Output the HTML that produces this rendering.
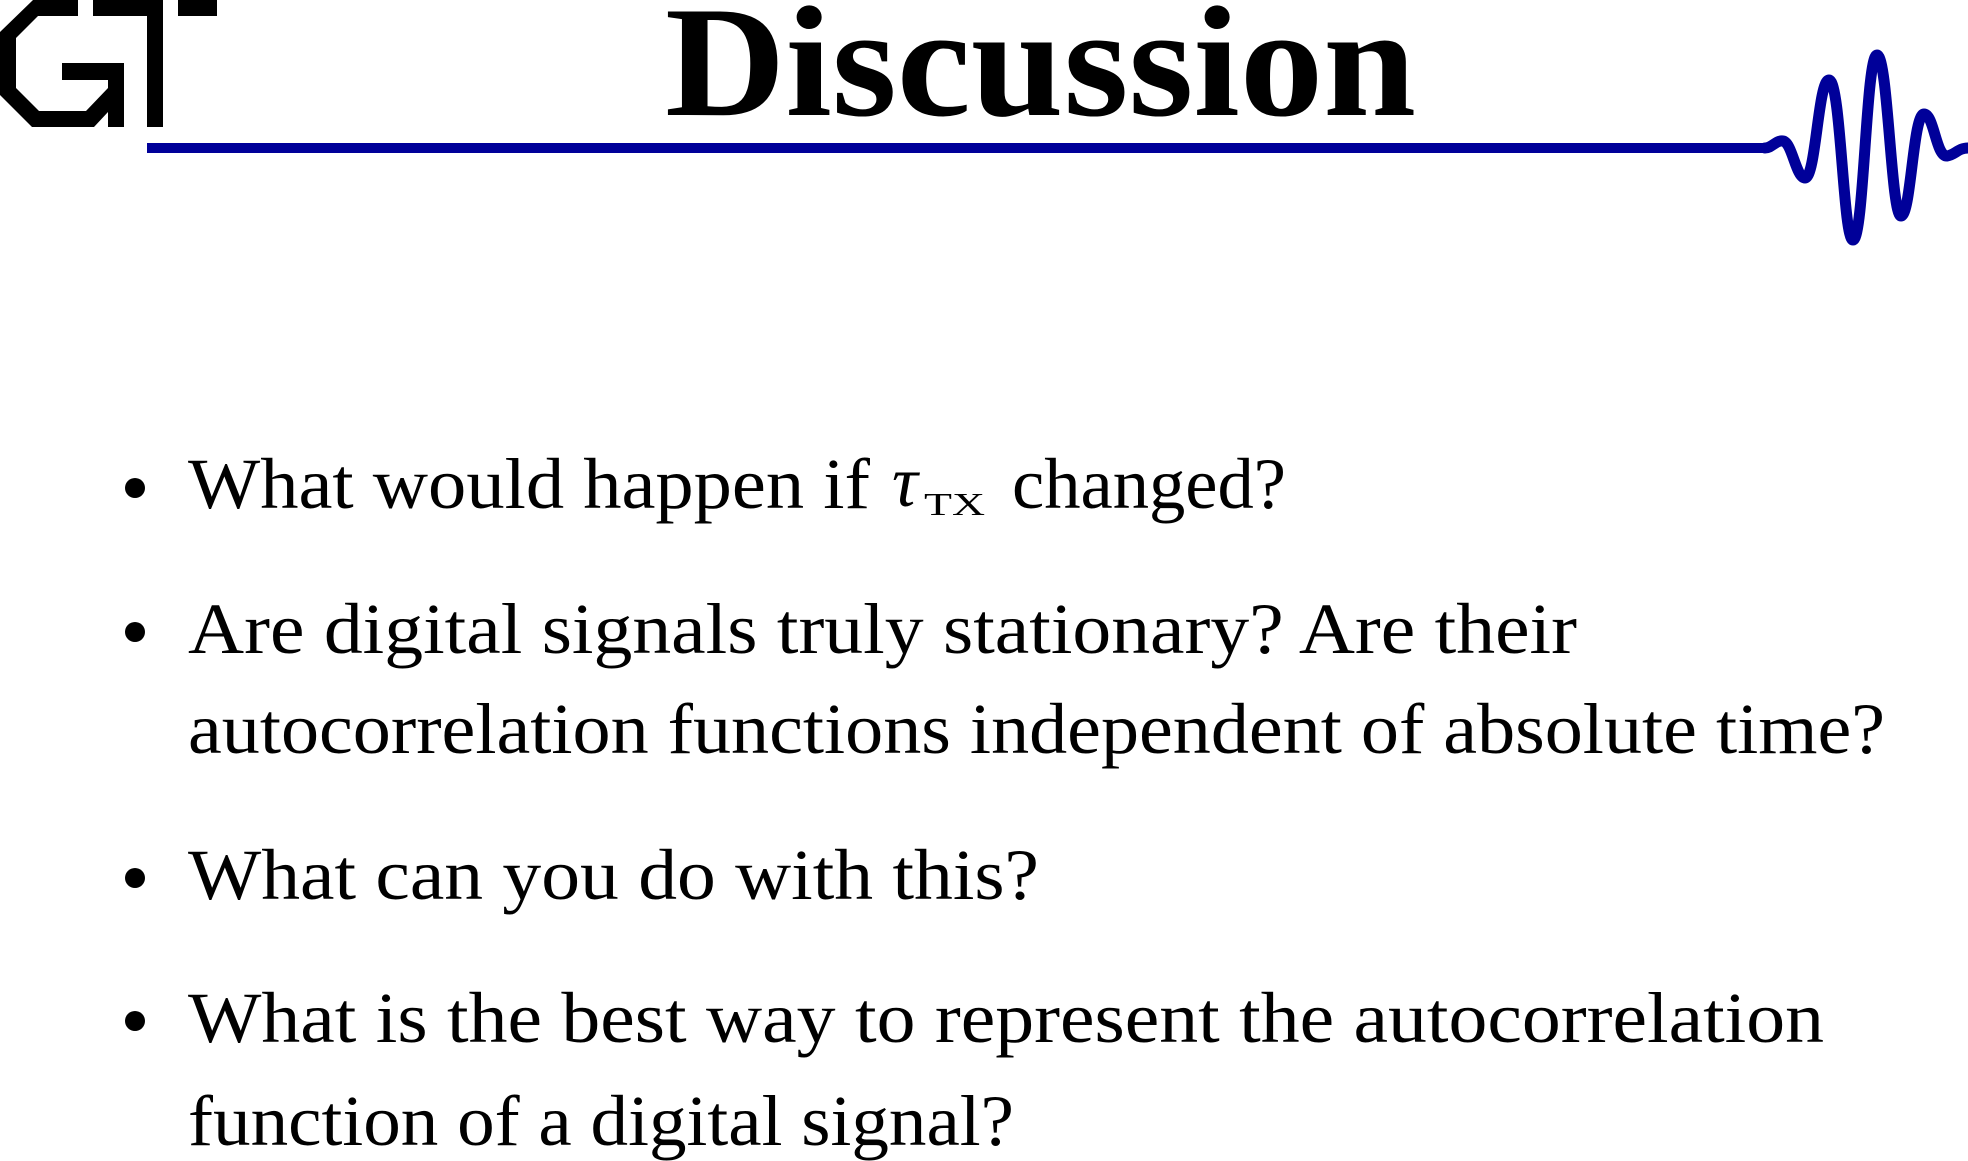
<!DOCTYPE html>
<html><head><meta charset="utf-8"><style>
html,body{margin:0;padding:0;background:#fff;width:1968px;height:1161px;overflow:hidden}
svg{display:block}
text{font-family:"Liberation Serif","DejaVu Serif",serif;fill:#000}
</style></head><body>
<svg width="1968" height="1161" viewBox="0 0 1968 1161" xmlns="http://www.w3.org/2000/svg">
<polygon points="78,0 33,0 0,32 0,95 32,127 94,127 108,112 108,127 124,127 124,63 62,63 62,80 108,80 108,88 86,111 39,111 16,88 16,38 38,16 78,16" fill="#000"/>
<polygon points="93,0 163,0 163,127 147,127 147,16 93,16" fill="#000"/>
<rect x="178" y="0" width="39" height="16" fill="#000"/>
<rect x="147" y="143" width="1622" height="10" fill="#000099"/>
<path d="M1765,148 C1772,148 1776,140 1783,141 C1792,142 1796,178 1805,178 C1816,178 1818,80 1829,80 C1841,80 1843,240 1853,240 C1864,240 1866,55 1877,55 C1888,55 1891,216 1901,216 C1911,216 1913,114 1924,114 C1934,114 1936,157 1947,156 C1955,155 1958,148 1968,148" fill="none" stroke="#000099" stroke-width="11" stroke-linecap="round"/>
<text x="665" y="115" font-size="158" font-weight="bold" textLength="751" lengthAdjust="spacingAndGlyphs">Discussion</text>

<circle cx="135" cy="488" r="10" fill="#000"/>
<circle cx="135" cy="632" r="10" fill="#000"/>
<circle cx="135" cy="878" r="10" fill="#000"/>
<circle cx="135" cy="1021" r="10" fill="#000"/>

<g font-size="72">
<text x="188" y="508" textLength="682" lengthAdjust="spacingAndGlyphs">What would happen if</text>
<text x="892" y="506" font-style="italic" font-size="72">τ</text>
<text x="924" y="515" font-size="32" textLength="61" lengthAdjust="spacingAndGlyphs">TX</text>
<text x="1012" y="508" textLength="274" lengthAdjust="spacingAndGlyphs">changed?</text>
<text x="188" y="653" textLength="1389" lengthAdjust="spacingAndGlyphs">Are digital signals truly stationary?  Are their</text>
<text x="188" y="753" textLength="1697" lengthAdjust="spacingAndGlyphs">autocorrelation functions independent of absolute time?</text>
<text x="188" y="899" textLength="851" lengthAdjust="spacingAndGlyphs">What can you do with this?</text>
<text x="188" y="1042" textLength="1636" lengthAdjust="spacingAndGlyphs">What is the best way to represent the autocorrelation</text>
<text x="188" y="1145" textLength="826" lengthAdjust="spacingAndGlyphs">function of a digital signal?</text>
</g>
</svg>
</body></html>
